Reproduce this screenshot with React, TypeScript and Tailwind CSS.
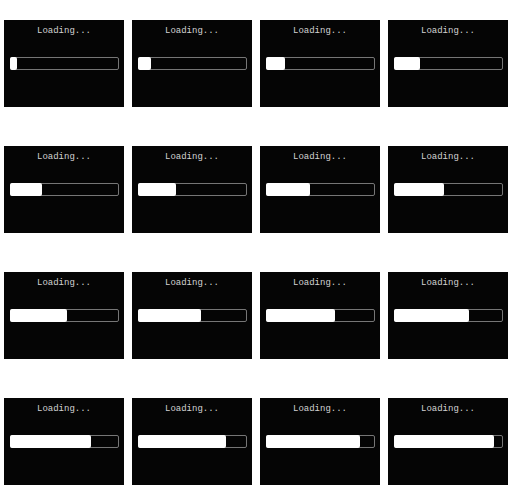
import React from "react";

const frames = Array.from({ length: 16 }, (_, i) => Math.round(7 + 6.2 * i));

function LoadingPanel({ fill }: { fill: number }) {
  return (
    <div className="flex h-[126px] w-[128px] justify-center pt-5">
      <div className="flex h-[87px] w-[120px] flex-col bg-[#050505] pt-[6px]">
        <div className="text-center font-['Liberation_Mono',monospace] text-[9px] leading-[11px] text-[#d2d2d2]">
          Loading...
        </div>
        <div className="ml-[6px] mt-[20px] flex h-[13px] w-[109px] rounded-[2px] border border-[#767676]">
          <div
            className="-my-px -ml-px h-[13px] rounded-[2px] bg-white"
            style={{ width: fill }}
          />
        </div>
      </div>
    </div>
  );
}

export default function App() {
  return (
    <div className="grid w-[512px] grid-cols-4 bg-white">
      {frames.map((f, i) => (
        <LoadingPanel key={i} fill={f} />
      ))}
    </div>
  );
}
